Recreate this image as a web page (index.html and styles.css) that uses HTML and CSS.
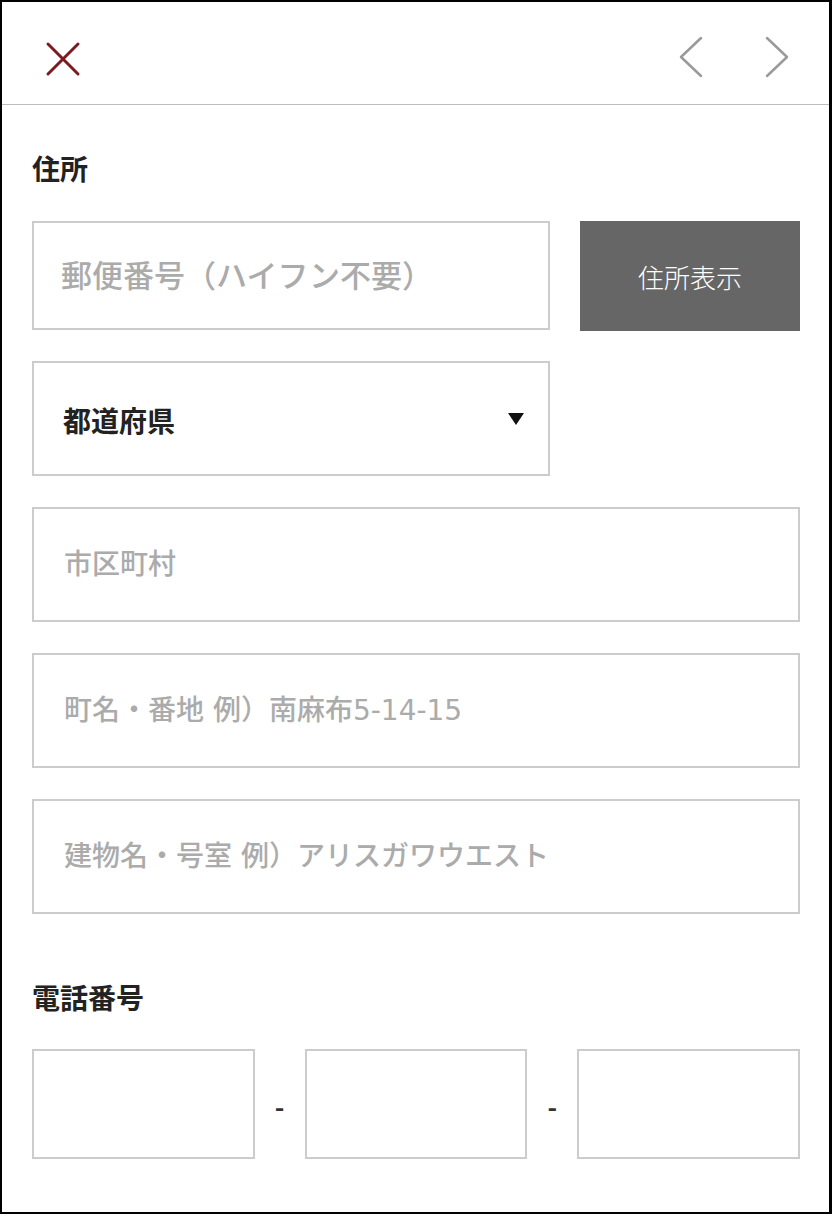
FILE: index.html
```html
<!DOCTYPE html>
<html lang="ja">
<head>
<meta charset="utf-8">
<title>住所入力</title>
<link rel="stylesheet" href="styles.css">
</head>
<body>
<div class="frame">
  <header class="header">
    <button class="icon-btn close" aria-label="閉じる">
      <svg width="40" height="40" viewBox="0 0 40 40"><path d="M5 5 L35 35 M35 5 L5 35" fill="none" stroke="#7d1a20" stroke-width="3" stroke-linecap="round"/></svg>
    </button>
    <nav class="pager">
      <button class="icon-btn" aria-label="前へ">
        <svg width="30" height="44" viewBox="0 0 30 44"><path d="M25 3 L5 22 L25 41" fill="none" stroke="#9a9a9a" stroke-width="2.5" stroke-linecap="round" stroke-linejoin="round"/></svg>
      </button>
      <button class="icon-btn" aria-label="次へ">
        <svg width="30" height="44" viewBox="0 0 30 44"><path d="M5 3 L25 22 L5 41" fill="none" stroke="#9a9a9a" stroke-width="2.5" stroke-linecap="round" stroke-linejoin="round"/></svg>
      </button>
    </nav>
  </header>
  <main class="main">
    <section class="address">
      <h2 class="section-title">住所</h2>
      <div class="fields">
        <div class="postal-row">
          <input class="field postal" type="text" placeholder="郵便番号（ハイフン不要）">
          <button class="lookup-btn">住所表示</button>
        </div>
        <div class="field select">
          <span class="select-label">都道府県</span>
          <span class="triangle"></span>
        </div>
        <input class="field" type="text" placeholder="市区町村">
        <input class="field" type="text" placeholder="町名・番地 例）南麻布5-14-15">
        <input class="field" type="text" placeholder="建物名・号室 例）アリスガワウエスト">
      </div>
    </section>
    <section class="phone">
      <h2 class="section-title">電話番号</h2>
      <div class="phone-row">
        <input class="field tel" type="tel">
        <span class="dash">-</span>
        <input class="field tel" type="tel">
        <span class="dash">-</span>
        <input class="field tel" type="tel">
      </div>
    </section>
  </main>
</div>
</body>
</html>
```

FILE: styles.css
```css
html, body {
  margin: 0;
  padding: 0;
  background: #fff;
}

.frame {
  width: 832px;
  height: 1214px;
  box-sizing: border-box;
  border-style: solid;
  border-color: #000;
  border-width: 2px 3px 2px 2px;
  font-family: "Noto Sans CJK JP", "Noto Sans", sans-serif;
  color: #222;
  overflow: hidden;
}

.header {
  height: 103px;
  box-sizing: border-box;
  padding: 11px 37px 0 41px;
  border-bottom: 1px solid #bdbdbd;
  display: flex;
  align-items: center;
  justify-content: space-between;
}

.icon-btn {
  border: 0;
  background: none;
  padding: 0;
  margin: 0;
  display: block;
  cursor: pointer;
}

.icon-btn svg {
  display: block;
}

.pager {
  display: flex;
  gap: 56px;
  margin-top: -3px;
}

.main {
  padding: 43px 29px 0 30px;
}

.section-title {
  margin: 0 0 33px;
  font-size: 28px;
  line-height: 40px;
  font-weight: 700;
  color: #222;
}

.fields {
  display: flex;
  flex-direction: column;
  gap: 31px;
}

.postal-row {
  display: flex;
  gap: 30px;
  height: 109px;
}

.field {
  box-sizing: border-box;
  height: 115px;
  border: 2px solid #cccccc;
  background: #fff;
  margin: 0;
  padding: 0 0 0 30px;
  font-family: "DejaVu Sans", "Noto Sans CJK JP", sans-serif;
  font-size: 28px;
  font-weight: 500;
  color: #222;
  outline: none;
  border-radius: 0;
  width: 100%;
}

.field::placeholder {
  color: #ababab;
}

.postal {
  flex: 1;
  height: 109px;
  width: auto;
  min-width: 0;
  padding-left: 27px;
  font-size: 31px;
}

.lookup-btn {
  width: 220px;
  height: 110px;
  border: 0;
  background: #666666;
  color: #fff;
  font-family: inherit;
  font-size: 26px;
  font-weight: 300;
  padding: 0;
  margin: 0;
  cursor: pointer;
}

.select {
  width: 518px;
  display: flex;
  align-items: center;
  justify-content: space-between;
  padding: 0 24px 0 29px;
}

.select-label {
  font-family: "Noto Sans CJK JP", sans-serif;
  font-size: 28px;
  font-weight: 700;
  color: #222;
  line-height: 40px;
  margin-top: 2px;
}

.triangle {
  width: 0;
  height: 0;
  border-left: 8px solid transparent;
  border-right: 8px solid transparent;
  border-top: 12px solid #111;
}

.phone .section-title {
  margin-top: 63px;
  margin-bottom: 32px;
}

.phone-row {
  display: grid;
  grid-template-columns: 1fr 50px 1fr 50px 1fr;
  height: 110px;
  align-items: center;
}

.tel {
  height: 110px;
}

.dash {
  text-align: center;
  font-size: 26px;
  font-weight: 700;
  color: #333;
  line-height: 1;
  margin-top: 4px;
}
```
